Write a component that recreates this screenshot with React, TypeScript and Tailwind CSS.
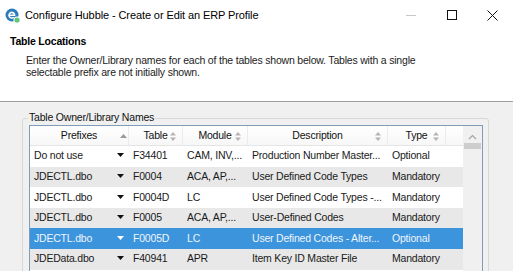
import React from "react";

type Row = { p: string; t: string; m: string; d: string; ty: string; bg: "w" | "g" | "s" };

const rows: Row[] = [
  { p: "Do not use", t: "F34401", m: "CAM, INV,...", d: "Production Number Master...", ty: "Optional", bg: "w" },
  { p: "JDECTL.dbo", t: "F0004", m: "ACA, AP,...", d: "User Defined Code Types", ty: "Mandatory", bg: "g" },
  { p: "JDECTL.dbo", t: "F0004D", m: "LC", d: "User Defined Code Types -...", ty: "Mandatory", bg: "w" },
  { p: "JDECTL.dbo", t: "F0005", m: "ACA, AP,...", d: "User-Defined Codes", ty: "Mandatory", bg: "g" },
  { p: "JDECTL.dbo", t: "F0005D", m: "LC", d: "User Defined Codes - Alter...", ty: "Optional", bg: "s" },
  { p: "JDEData.dbo", t: "F40941", m: "APR", d: "Item Key ID Master File", ty: "Mandatory", bg: "g" },
];

function SortBoth() {
  return (
    <svg width="6" height="9" viewBox="0 0 6 9" className="absolute right-[6px] top-[6px]">
      <path d="M3 0 L6 3.5 L0 3.5 Z" fill="#b4b4b4" />
      <path d="M3 9 L6 5.5 L0 5.5 Z" fill="#b4b4b4" />
    </svg>
  );
}

function Header({ w, label, sort }: { w: string; label: string; sort: "up" | "both" | "none" }) {
  return (
    <div className={`relative h-full ${w} flex items-center justify-center border-r border-[#ececec] shrink-0`}>
      <span>{label}</span>
      {sort === "both" && <SortBoth />}
      {sort === "up" && (
        <svg width="7" height="4" viewBox="0 0 7 4" className="absolute left-[90px] top-[8px]">
          <path d="M3.5 0 L7 4 L0 4 Z" fill="#9a9a9a" />
        </svg>
      )}
    </div>
  );
}

function Icon() {
  return (
    <svg width="16" height="16" viewBox="0 0 16 16">
      <circle cx="7" cy="7" r="6.5" fill="#2c7bbd" />
      <path d="M4 7.2 H9.6 A2.8 2.8 0 1 0 8.8 9.2" stroke="#ffffff" strokeWidth="1.6" fill="none" />
      <circle cx="12" cy="12" r="3.6" fill="#ffffff" />
      <circle cx="12" cy="12" r="2.6" fill="#5cc67a" />
    </svg>
  );
}

export default function App() {
  return (
    <div
      className="w-[513px] h-[271px] overflow-hidden bg-[#f0f0f0] flex flex-col text-[10.5px] tracking-[-0.2px] text-[#111]"
      style={{ fontFamily: '"Liberation Sans", Arial, sans-serif' }}
    >
      {/* title bar */}
      <div className="h-[30px] bg-white flex items-center shrink-0">
        <div className="ml-[5px] mt-[1px]">
          <Icon />
        </div>
        <span className="ml-[4px] text-[11px] tracking-[-0.1px] text-black">
          Configure Hubble - Create or Edit an ERP Profile
        </span>
        <div className="ml-auto flex items-center h-full">
          <div className="w-[41px] h-full flex items-center justify-center">
            <div className="w-[10px] h-px bg-[#c8c8c8]" />
          </div>
          <div className="w-[41px] h-full flex items-center justify-center">
            <div className="w-[10px] h-[10px] border border-[#111]" />
          </div>
          <div className="w-[41px] h-full flex items-center justify-center">
            <svg width="11" height="11" viewBox="0 0 11 11">
              <path d="M0.5 0.5 L10.5 10.5 M10.5 0.5 L0.5 10.5" stroke="#111" strokeWidth="1" />
            </svg>
          </div>
        </div>
      </div>

      {/* header section */}
      <div className="h-[71px] bg-white shrink-0 pt-[5px]">
        <div className="pl-[10px] font-bold leading-[13px] text-black">Table Locations</div>
        <div className="pl-[26px] pt-[6px] leading-[12px] text-[#222]">
          <div>Enter the Owner/Library names for each of the tables shown below. Tables with a single</div>
          <div>selectable prefix are not initially shown.</div>
        </div>
      </div>
      <div className="h-px bg-[#a0a0a0] shrink-0" />

      {/* group box */}
      <div className="flex-1 pt-[16px] pl-[22px]">
        <div className="relative w-[467px] h-[200px] border border-[#d8d8d8] rounded-[3px] pl-[6px] pt-[6px]">
          <span className="absolute left-[5px] top-[-8px] bg-[#f0f0f0] px-[1px] leading-[13px] text-[#111]">
            Table Owner/Library Names
          </span>
          <div className="w-[454px] h-[200px] border border-[#7f9db9] bg-white flex">
            <div className="w-[433px] flex flex-col">
              {/* header */}
              <div className="h-[20px] flex bg-gradient-to-b from-white to-[#f7f7f7] border-b border-[#e5e5e5] text-[#111]">
                <Header w="w-[99px]" label="Prefixes" sort="up" />
                <Header w="w-[54px]" label="Table" sort="both" />
                <Header w="w-[65px]" label="Module" sort="both" />
                <Header w="w-[140px]" label="Description" sort="both" />
                <Header w="w-[58px]" label="Type" sort="both" />
              </div>
              {rows.map((r, i) => {
                const bg = r.bg === "w" ? "bg-white" : r.bg === "g" ? "bg-[#e8e8e8]" : "bg-[#3c94dc]";
                const tc = r.bg === "s" ? "text-[#eef5fc]" : "text-[#1a1a1a]";
                return (
                  <div key={i} className={`h-[20.6px] flex items-center shrink-0 ${bg} ${tc}`}>
                    <div className="w-[99px] relative flex items-center pl-[4px] shrink-0">
                      <span>{r.p}</span>
                      <svg width="7" height="4" viewBox="0 0 7 4" className="absolute left-[87px] top-[5px]">
                        <path d="M0 0 L7 0 L3.5 4 Z" fill={r.bg === "s" ? "#ffffff" : "#111111"} />
                      </svg>
                    </div>
                    <div className="w-[54px] pl-[4px] shrink-0">{r.t}</div>
                    <div className="w-[65px] pl-[4px] shrink-0">{r.m}</div>
                    <div className="w-[140px] pl-[4px] shrink-0 whitespace-nowrap">{r.d}</div>
                    <div className="w-[58px] pl-[4px] shrink-0">{r.ty}</div>
                  </div>
                );
              })}
            </div>
            {/* scrollbar */}
            <div className="w-[19px] bg-[#f0f0f0] flex flex-col items-center">
              <svg width="9" height="6" viewBox="0 0 9 6" className="mt-[8px]">
                <path d="M1 5 L4.5 1.5 L8 5" stroke="#a3a3a3" strokeWidth="1.2" fill="none" />
              </svg>
              <div className="mt-[3px] w-[17px] h-[6px] bg-[#cdcdcd]" />
            </div>
          </div>
        </div>
      </div>
    </div>
  );
}
